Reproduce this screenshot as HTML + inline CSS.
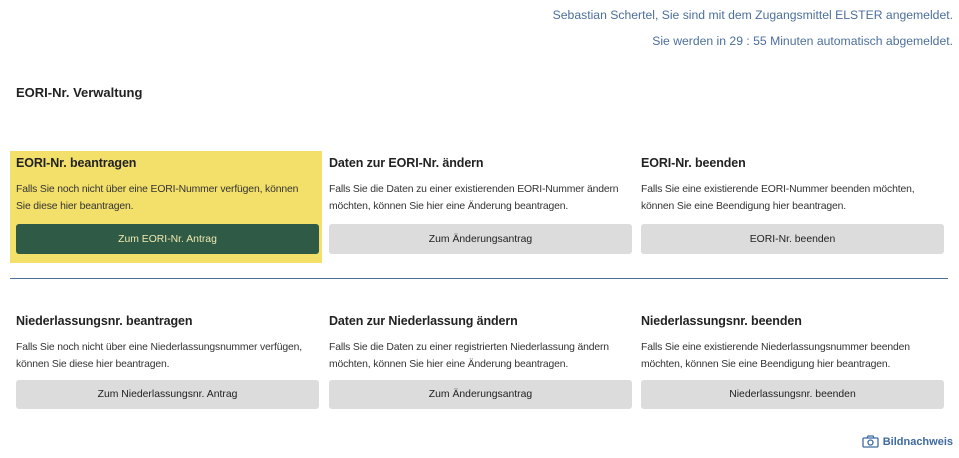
<!DOCTYPE html>
<html><head><meta charset="utf-8"><style>
*{margin:0;padding:0;box-sizing:border-box}
body{width:959px;height:458px;background:#fff;font-family:"Liberation Sans",sans-serif;position:relative;overflow:hidden;color:#222}
.hdr{position:absolute;right:6px;font-size:12.2px;color:#4d6f9c;white-space:nowrap}
h1{position:absolute;left:16px;top:85px;font-size:13px;font-weight:bold;color:#222}
.card{position:absolute;width:303px}
.card h2{font-size:12.5px;font-weight:bold;margin-bottom:11px;color:#222;letter-spacing:-0.1px}
.card p{font-size:10.4px;line-height:17px;color:#333;height:36px;letter-spacing:-0.15px;padding-right:4px}
.btn{margin-top:7px;height:30px;border-radius:3px;background:#dcdcdc;font-size:10.4px;display:flex;align-items:center;justify-content:center;color:#222}
.r2 .btn{margin-top:5px;height:29px}
.yel{position:absolute;left:10px;top:151px;width:312px;height:112px;background:#f3e06a}
.green{background:#2e5a46;color:#f0e9b0}
.line{position:absolute;left:10px;top:278px;width:938px;height:1px;background:#4d6f9c}
.bn{position:absolute;right:6px;top:435px;font-size:11px;font-weight:bold;color:#3e6aa0;display:flex;align-items:center;gap:4px}
</style></head><body>
<div class="hdr" style="top:8px">Sebastian Schertel, Sie sind mit dem Zugangsmittel ELSTER angemeldet.</div>
<div class="hdr" style="top:34px">Sie werden in 29 : 55 Minuten automatisch abgemeldet.</div>
<h1>EORI-Nr. Verwaltung</h1>
<div class="yel"></div>
<div class="card" style="left:16px;top:156px"><h2>EORI-Nr. beantragen</h2><p>Falls Sie noch nicht über eine EORI-Nummer verfügen, können Sie diese hier beantragen.</p><div class="btn green">Zum EORI-Nr. Antrag</div></div>
<div class="card" style="left:329px;top:156px"><h2>Daten zur EORI-Nr. ändern</h2><p>Falls Sie die Daten zu einer existierenden EORI-Nummer ändern möchten, können Sie hier eine Änderung beantragen.</p><div class="btn">Zum Änderungsantrag</div></div>
<div class="card" style="left:641px;top:156px"><h2>EORI-Nr. beenden</h2><p>Falls Sie eine existierende EORI-Nummer beenden möchten, können Sie eine Beendigung hier beantragen.</p><div class="btn">EORI-Nr. beenden</div></div>
<div class="line"></div>
<div class="card r2" style="left:16px;top:314px"><h2>Niederlassungsnr. beantragen</h2><p>Falls Sie noch nicht über eine Niederlassungsnummer verfügen, können Sie diese hier beantragen.</p><div class="btn">Zum Niederlassungsnr. Antrag</div></div>
<div class="card r2" style="left:329px;top:314px"><h2>Daten zur Niederlassung ändern</h2><p>Falls Sie die Daten zu einer registrierten Niederlassung ändern möchten, können Sie hier eine Änderung beantragen.</p><div class="btn">Zum Änderungsantrag</div></div>
<div class="card r2" style="left:641px;top:314px"><h2>Niederlassungsnr. beenden</h2><p>Falls Sie eine existierende Niederlassungsnummer beenden möchten, können Sie eine Beendigung hier beantragen.</p><div class="btn">Niederlassungsnr. beenden</div></div>
<div class="bn"><svg width="17" height="13" viewBox="0 0 17 13"><rect x="1" y="3" width="15" height="9" rx="1" fill="none" stroke="#3e6aa0" stroke-width="1.3"/><path d="M5 3 L6 1 H11 L12 3" fill="none" stroke="#3e6aa0" stroke-width="1.3"/><circle cx="8.5" cy="7.5" r="2.5" fill="none" stroke="#3e6aa0" stroke-width="1.3"/></svg>Bildnachweis</div>
</body></html>
